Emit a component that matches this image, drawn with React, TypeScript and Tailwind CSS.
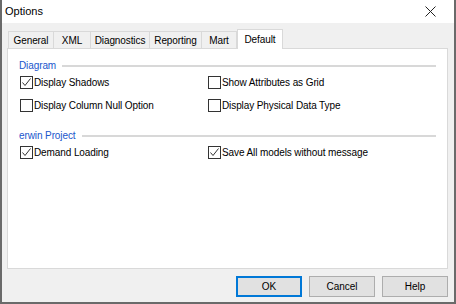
import React from "react";

const font = { fontFamily: '"Liberation Sans", Arial, sans-serif' };

function Check({ checked, label }: { checked?: boolean; label: string }) {
  return (
    <div className="flex items-center h-[23px]">
      <div className="w-[13px] h-[13px] border border-[#333333] bg-white flex items-center justify-center shrink-0">
        {checked && (
          <svg width="11" height="11" viewBox="0 0 11 11">
            <path d="M1.5 5.5 L4 8.5 L9.5 1.5" fill="none" stroke="#333" strokeWidth="1" />
          </svg>
        )}
      </div>
      <span className="ml-[1px] text-[10px] tracking-[-0.1px] text-black leading-none whitespace-nowrap">{label}</span>
    </div>
  );
}

function Header({ title }: { title: string }) {
  return (
    <div className="flex items-center h-[14px] pr-[11px]">
      <span className="text-[10px] tracking-[-0.1px] leading-none text-[#1a56cc] whitespace-nowrap">{title}</span>
      <div className="flex-1 ml-[6px] h-[2px] bg-[#d8d8d8]" />
    </div>
  );
}

function Tab({ label, w, selected }: { label: string; w: number; selected?: boolean }) {
  return (
    <div
      className={
        selected
          ? "h-[20px] bg-white border border-b-0 border-[#d9d9d9] flex items-center justify-center text-[10px] tracking-[-0.1px] text-black -mb-px relative z-10"
          : "h-[17px] bg-[#f0f0f0] border border-b-0 border-[#d9d9d9] -ml-px first:ml-0 flex items-center justify-center text-[10px] tracking-[-0.1px] text-black"
      }
      style={{ width: w }}
    >
      {label}
    </div>
  );
}

export default function App() {
  return (
    <div style={font} className="w-[456px] h-[304px] bg-[#f0f0f0] border-l-2 border-r-2 border-b-2 border-[#6a6a6a] flex flex-col overflow-hidden">
      <div className="h-[23px] bg-white flex items-center justify-between pl-[3px] pr-[18px] shrink-0">
        <span className="text-[11px] text-black">Options</span>
        <svg width="11" height="11" viewBox="0 0 11 11">
          <path d="M0.5 0.5 L10.5 10.5 M10.5 0.5 L0.5 10.5" stroke="#222" strokeWidth="1" />
        </svg>
      </div>
      <div className="flex items-end pl-[6px] mt-[6px] h-[19px] shrink-0">
        <Tab label="General" w={46} />
        <Tab label="XML" w={38} />
        <Tab label="Diagnostics" w={60} />
        <Tab label="Reporting" w={53} />
        <Tab label="Mart" w={36} />
        <Tab label="Default" w={46} selected />
      </div>
      <div className="ml-[5px] mr-[6px] h-[221px] bg-white border border-[#d9d9d9] pl-[11px] pt-[10px] shrink-0">
        <Header title="Diagram" />
        <div className="grid grid-cols-[188px_1fr] pl-[1px] -mt-[2px]">
          <Check checked label="Display Shadows" />
          <Check label="Show Attributes as Grid" />
          <Check label="Display Column Null Option" />
          <Check label="Display Physical Data Type" />
        </div>
        <div className="mt-[12px]">
          <Header title="erwin Project" />
        </div>
        <div className="grid grid-cols-[188px_1fr] pl-[1px] -mt-[2px]">
          <Check checked label="Demand Loading" />
          <Check checked label="Save All models without message" />
        </div>
      </div>
      <div className="flex justify-end gap-[7px] pr-[6px] mt-[7px]">
        <button className="w-[66px] h-[21px] bg-[#e1e1e1] border-2 border-[#0078d7] text-[10px] text-black">OK</button>
        <button className="w-[66px] h-[21px] bg-[#e1e1e1] border border-[#adadad] text-[10px] text-black">Cancel</button>
        <button className="w-[66px] h-[21px] bg-[#e1e1e1] border border-[#adadad] text-[10px] text-black">Help</button>
      </div>
    </div>
  );
}
